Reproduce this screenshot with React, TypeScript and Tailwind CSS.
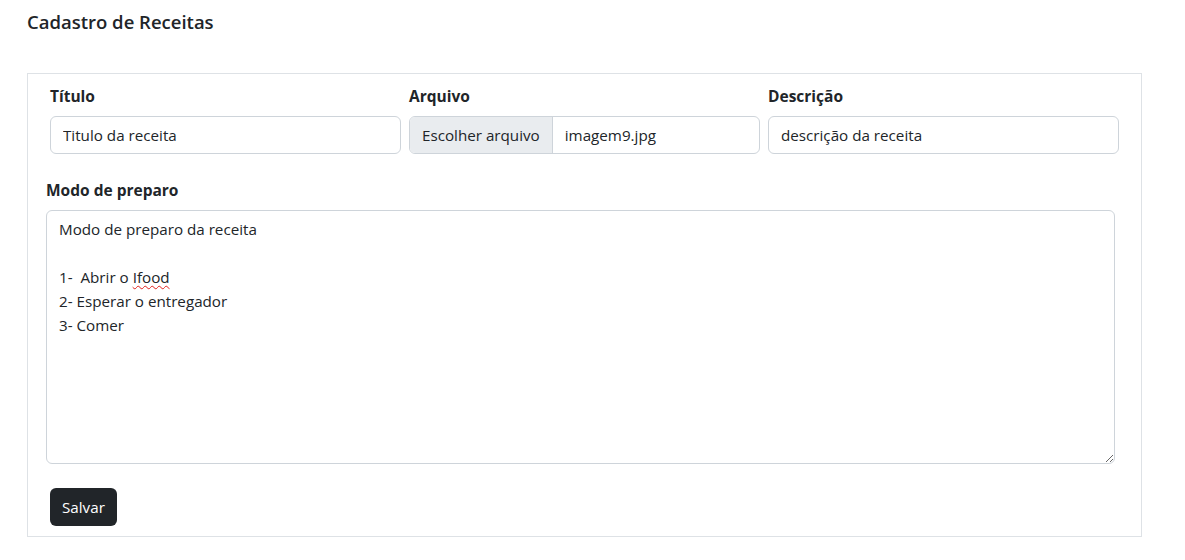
import React from 'react'

const font = { fontFamily: '"Open Sans", "Noto Sans", sans-serif' }

function Field({ label, children }: { label: string; children: React.ReactNode }) {
  return (
    <div className="flex flex-col">
      <label className="mb-2 text-[15.5px] leading-6 font-bold text-[#212529]">{label}</label>
      {children}
    </div>
  )
}

export default function App() {
  return (
    <div className="min-h-[560px] bg-white text-[#212529]" style={font}>
      <div className="pt-[9px] pl-[27px] pr-[43px]">
        <h5 className="text-[18.5px] leading-[26px] font-semibold">Cadastro de Receitas</h5>

        <div className="mt-[38px] border border-[#dee2e6] pt-[10px] pb-[10px]">
          <div className="pl-[22px] grid grid-cols-[351px_351px_351px] gap-[8px]">
            <Field label="Título">
              <input
                className="h-[38px] rounded-[6px] border border-[#ced4da] px-3 text-[15.2px] text-[#212529] outline-none"
                defaultValue="Titulo da receita"
              />
            </Field>
            <Field label="Arquivo">
              <div className="flex h-[38px] rounded-[6px] border border-[#ced4da] overflow-hidden text-[15.2px]">
                <span className="flex items-center px-3 bg-[#e9ecef] border-r border-[#ced4da] text-[#212529]">
                  Escolher arquivo
                </span>
                <span className="flex items-center px-3">imagem9.jpg</span>
              </div>
            </Field>
            <Field label="Descrição">
              <input
                className="h-[38px] rounded-[6px] border border-[#ced4da] px-3 text-[15.2px] text-[#212529] outline-none"
                defaultValue="descrição da receita"
              />
            </Field>
          </div>

          <div className="mt-6 pl-[18px] pr-[26px]">
            <Field label="Modo de preparo">
              <div className="h-[254px] resize overflow-auto rounded-[6px] border border-[#ced4da] px-3 py-[6px] text-[15.2px] leading-6 whitespace-pre">
                {'Modo de preparo da receita\n\n1-  Abrir o '}
                <span className="underline decoration-wavy decoration-[#e0201d] decoration-1 underline-offset-2">Ifood</span>
                {'\n2- Esperar o entregador\n3- Comer'}
              </div>
            </Field>
          </div>

          <div className="mt-6 pl-[22px]">
            <button className="h-[38px] rounded-[6px] bg-[#212529] px-3 text-[15.2px] text-white">Salvar</button>
          </div>
        </div>
      </div>
    </div>
  )
}
